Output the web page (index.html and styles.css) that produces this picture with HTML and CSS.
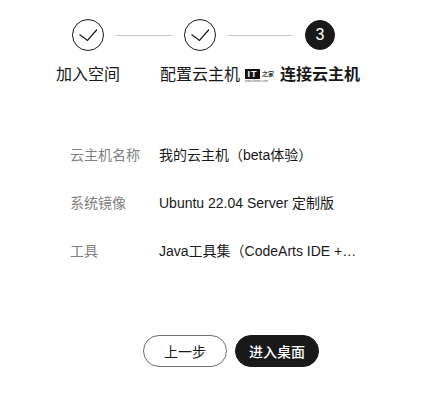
FILE: index.html
```html
<!DOCTYPE html>
<html lang="zh-CN">

<head>
    <meta charset="UTF-8">
    <title>连接云主机</title>
    <link rel="stylesheet" href="styles.css">
</head>

<body>
    <div class="wizard">
        <div class="step-track">
            <div class="step-circle">
                <svg width="32" height="32" viewBox="0 0 32 32"><path d="M7.5 15.5L15.5 21.5L25 10.5" /></svg>
            </div>
            <div class="step-line line-short"></div>
            <div class="step-circle">
                <svg width="32" height="32" viewBox="0 0 32 32"><path d="M7.5 15.5L15.5 21.5L25 10.5" /></svg>
            </div>
            <div class="step-line line-long"></div>
            <div class="step-circle current">3</div>
        </div>

        <div class="step-labels">
            <div class="step-label">加入空间</div>
            <div class="step-label">配置云主机</div>
            <div class="step-label current">连接云主机</div>
        </div>

        <div class="watermark">
            <div class="watermark-top">
                <span class="watermark-it">IT</span>
                <span class="watermark-home">之家</span>
            </div>
            <div class="watermark-url">www.ithome.com</div>
        </div>

        <div class="details">
            <div class="detail-row">
                <div class="detail-name">云主机名称</div>
                <div class="detail-value">我的云主机（beta体验）</div>
            </div>
            <div class="detail-row">
                <div class="detail-name">系统镜像</div>
                <div class="detail-value">Ubuntu 22.04 Server 定制版</div>
            </div>
            <div class="detail-row">
                <div class="detail-name">工具</div>
                <div class="detail-value">Java工具集（CodeArts IDE +…</div>
            </div>
        </div>

        <div class="actions">
            <button class="btn">上一步</button>
            <button class="btn btn-primary">进入桌面</button>
        </div>
    </div>
</body>

</html>
```

FILE: styles.css
```css
* {
    box-sizing: border-box;
}

body {
    margin: 0;
    background: #fff;
    color: #191919;
    font-family: "Liberation Sans", "Noto Sans CJK SC", sans-serif;
}

.wizard {
    position: relative;
    width: 430px;
    height: 409px;
    padding-top: 19px;
}

.step-track {
    display: flex;
    align-items: center;
    padding-left: 72px;
}

.step-circle {
    width: 32px;
    height: 32px;
    border: 1px solid #191919;
    border-radius: 50%;
    display: flex;
    align-items: center;
    justify-content: center;
    flex-shrink: 0;
}

.step-circle svg {
    margin: -1px;
    fill: none;
    stroke: #191919;
    stroke-width: 1.2;
}

.step-circle.current {
    width: 30px;
    height: 30px;
    margin-left: 1px;
    background: #191919;
    color: #fff;
    font-size: 16px;
}

.step-line {
    height: 1px;
    margin: 0 12px;
    background: #c8c8c8;
}

.line-short {
    width: 56px;
}

.line-long {
    width: 64px;
}

.step-labels {
    display: flex;
    gap: 40px;
    padding-left: 56px;
    margin-top: 12px;
}

.step-label {
    font-size: 16px;
    line-height: 24px;
}

.step-label.current {
    font-weight: bold;
}

.watermark {
    position: absolute;
    left: 245px;
    top: 68px;
    width: 29px;
}

.watermark-top {
    display: flex;
    justify-content: space-between;
    align-items: center;
    height: 11px;
}

.watermark-it {
    width: 15px;
    height: 10px;
    background: #111;
    color: #fff;
    font-size: 9px;
    line-height: 10px;
    font-weight: bold;
    letter-spacing: 1px;
    text-align: center;
}

.watermark-home {
    font-size: 6px;
    line-height: 10px;
    font-weight: bold;
    color: #333;
}

.watermark-url {
    font-size: 3px;
    line-height: 4px;
    color: #555;
    white-space: nowrap;
}

.details {
    margin-top: 56px;
    padding-left: 70px;
}

.detail-row {
    display: flex;
    height: 48px;
    font-size: 14px;
    line-height: 24px;
}

.detail-name {
    width: 89px;
    color: #808080;
    flex-shrink: 0;
}

.detail-value {
    color: #191919;
    white-space: nowrap;
}

.actions {
    display: flex;
    justify-content: center;
    gap: 8px;
    margin-top: 48px;
    padding-left: 32px;
}

.btn {
    width: 84px;
    height: 32px;
    border: 1px solid #707070;
    border-radius: 16px;
    background: #fff;
    color: #191919;
    font-family: inherit;
    font-size: 14px;
    padding: 0;
}

.btn-primary {
    background: #191919;
    border-color: #191919;
    color: #fff;
    font-weight: 500;
}
```
